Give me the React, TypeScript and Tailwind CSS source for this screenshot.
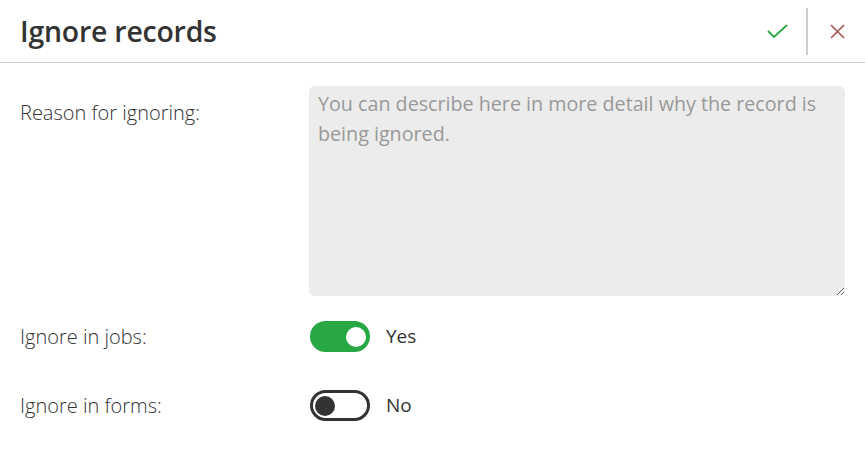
import React from "react";

export default function App() {
  const font = { fontFamily: '"Open Sans", "Noto Sans", sans-serif' };
  return (
    <div className="w-[865px] h-[452px] bg-white text-[#333333] overflow-hidden" style={font}>
      <div className="h-[63px] flex items-center border-b border-[#cccccc] pl-[20px]">
        <h1 className="flex-1 text-[28.4px] font-semibold leading-none tracking-[-0.2px] pt-[1px]">Ignore records</h1>
        <div className="flex items-center h-full">
          <button className="flex items-center justify-center text-[#28a745]">
            <svg width="21" height="14" viewBox="0 0 21 14" fill="none" stroke="currentColor" strokeWidth="1.8">
              <path d="M1 7l6 6L20 1" />
            </svg>
          </button>
          <div className="w-[2px] h-[47px] bg-[#cccccc] ml-[18px] mr-[22px]" />
          <button className="w-[15px] mr-[20px] flex items-center justify-center text-[#a65252]">
            <svg width="15" height="15" viewBox="0 0 15 15" fill="none" stroke="currentColor" strokeWidth="1.6">
              <path d="M1 1l13 13M14 1L1 14" />
            </svg>
          </button>
        </div>
      </div>
      <div className="grid grid-cols-[289px_536px] pl-[20px] pt-[23px]">
        <div className="text-[20px] font-light pt-[15px] leading-[24px]">Reason for ignoring:</div>
        <textarea
          className="w-[536px] h-[210px] bg-[#ececec] rounded-[6px] px-[9px] py-[3px] text-[19.7px] leading-[30px] text-[#333] placeholder:text-[#999999] outline-none"
          style={font}
          placeholder="You can describe here in more detail why the record is being ignored."
        />
        <div className="text-[20px] font-light leading-[24px] flex items-center h-[31px] mt-[25px]">Ignore in jobs:</div>
        <div className="flex items-center h-[31px] mt-[25px] pl-[1px]">
          <div className="w-[60px] h-[31px] rounded-full bg-[#28a745] flex items-center justify-end pr-[4px]">
            <div className="w-[20px] h-[20px] rounded-full bg-white" />
          </div>
          <span className="ml-[16px] text-[19px]">Yes</span>
        </div>
        <div className="text-[20px] font-light leading-[24px] flex items-center h-[31px] mt-[38px]">Ignore in forms:</div>
        <div className="flex items-center h-[31px] mt-[38px] pl-[1px]">
          <div className="w-[60px] h-[31px] rounded-full border-[3px] border-[#333333] flex items-center pl-[2px]">
            <div className="w-[20px] h-[20px] rounded-full bg-[#333333]" />
          </div>
          <span className="ml-[16px] text-[19px]">No</span>
        </div>
      </div>
    </div>
  );
}
